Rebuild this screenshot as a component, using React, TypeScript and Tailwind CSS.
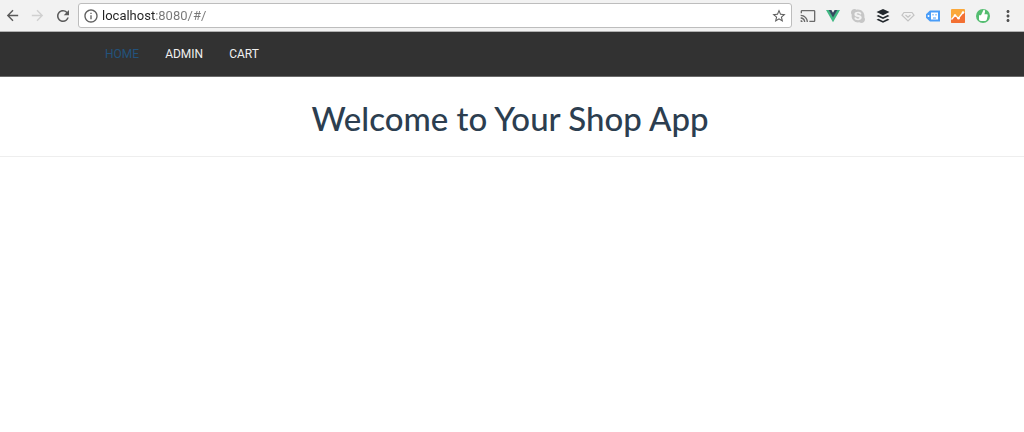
import { useState, type ReactNode } from "react";
import {
  MdArrowBack,
  MdArrowForward,
  MdCast,
  MdInfoOutline,
  MdMoreVert,
  MdRefresh,
  MdStarBorder,
} from "react-icons/md";
import { FaSkype } from "react-icons/fa";

const VueIcon = () => (
  <svg viewBox="0 0 16 16" className="size-4">
    <path d="M1 2h3.200L8 8.600 11.800 2H15L8 14.200z" fill="#41b883" />
    <path d="M3.700 2h2.700L8 4.800 9.600 2h2.700L8 9.500z" fill="#35495e" />
  </svg>
);

const BufferIcon = () => (
  <svg viewBox="0 0 16 16" className="size-4" fill="#23282d">
    <path d="M8 1l6.500 3.100L8 7.200 1.500 4.100z" />
    <path d="M1.500 7.900l1.900-.9L8 9.200 12.600 7l1.900.9L8 11z" />
    <path d="M1.500 11.700l1.900-.9L8 13l4.600-2.200 1.900.9L8 14.800z" />
  </svg>
);

const GemIcon = () => (
  <svg viewBox="0 0 16 16" className="size-4" fill="none" stroke="#c3c3c3" strokeWidth="1.200">
    <path d="M4 4.500h8l2 2.700L8 13 2 7.200z" />
    <path d="M5.500 7L8 9.300 10.500 7" />
  </svg>
);

const TagIcon = () => (
  <svg viewBox="0 0 16 16" className="size-4">
    <path d="M5 2.500h10v11H5L1 9.800V6.200z" fill="#4a9df8" />
    <rect x="6" y="4.500" width="7" height="7" fill="#fff" />
    <path d="M8 6v1.500M11 6v1.500M8 10h3" stroke="#4a9df8" />
    <circle cx="3.500" cy="8" r="1" fill="#fff" />
  </svg>
);

const AnalyticsIcon = () => (
  <svg viewBox="0 0 16 16" className="size-4">
    <rect x="1" y="1" width="14" height="14" rx="1" fill="#fba83a" />
    <path d="M1 11.500l4-4 3 2.500 6-5.500 1 .5v9a1 1 0 0 1-1 1H2a1 1 0 0 1-1-1z" fill="#f37033" />
    <path d="M1.500 11.500L5 7.500l3.500 2.700L13 4.500" fill="none" stroke="#fff" strokeWidth="1.300" />
    <g fill="#fff">
      <circle cx="5" cy="7.500" r="1.300" />
      <circle cx="8.500" cy="10.200" r="1.300" />
      <circle cx="13" cy="4.500" r="1.300" />
    </g>
  </svg>
);

const ThumbIcon = () => (
  <svg viewBox="0 0 16 16" className="size-4">
    <circle cx="8" cy="8" r="7" fill="#54bd70" />
    <path
      d="M4 7.300h2L8.600 1.800c1.300 0 1.700 1 1.400 2.200l-.6 2.300h2.300c.9 0 1.100.7 1 1.300l-.9 3.900c-.2.900-.8 1.400-1.600 1.400H6c-1.200 0-2-.7-2-1.700z"
      fill="#fff"
    />
  </svg>
);

const extensions: { label: string; icon: ReactNode }[] = [
  { label: "Cast", icon: <MdCast className="size-4 text-[#6b6b6b]" /> },
  { label: "Vue devtools", icon: <VueIcon /> },
  { label: "Skype", icon: <FaSkype className="size-4 text-[#c6c6c6]" /> },
  { label: "Buffer", icon: <BufferIcon /> },
  { label: "Gem", icon: <GemIcon /> },
  { label: "Tag", icon: <TagIcon /> },
  { label: "Analytics", icon: <AnalyticsIcon /> },
  { label: "Like", icon: <ThumbIcon /> },
  { label: "Menu", icon: <MdMoreVert className="size-[18px] text-[#505050]" /> },
];

const links = [
  { label: "HOME", href: "#/" },
  { label: "ADMIN", href: "#/admin" },
  { label: "CART", href: "#/cart" },
];

interface IconButtonProps {
  label: string;
  children: ReactNode;
}

const IconButton = ({ label, children }: IconButtonProps) => (
  <button
    type="button"
    aria-label={label}
    className="flex h-6 w-[25px] shrink-0 items-center justify-center"
  >
    {children}
  </button>
);

const Toolbar = () => {
  const [url, setUrl] = useState("localhost:8080/#/");

  return (
    <div className="flex h-8 items-center border-b border-[#b0b0b0] bg-[#f2f2f2] pr-1">
      <IconButton label="Back">
        <MdArrowBack className="size-[17px] text-[#5a5a5a]" />
      </IconButton>
      <IconButton label="Forward">
        <MdArrowForward className="size-[17px] text-[#d0d0d0]" />
      </IconButton>
      <IconButton label="Reload">
        <MdRefresh className="size-[18px] text-[#5a5a5a]" />
      </IconButton>
      <div className="mx-[3px] flex h-[25px] grow items-center rounded-[3px] border border-[#bdbdbd] bg-white pl-1">
        <MdInfoOutline className="size-4 shrink-0 text-[#5f5f5f]" />
        {/* host is dark, the rest of the address is gray */}
        <input
          type="text"
          aria-label="Address"
          value={url}
          onChange={(e) => setUrl(e.target.value)}
          className="ml-[3px] min-w-0 grow bg-linear-to-r from-[#222222] from-[53px] to-[#777777] to-[53px] bg-clip-text font-['Roboto',sans-serif] text-[13px] leading-5 text-transparent outline-none"
        />
        <IconButton label="Bookmark">
          <MdStarBorder className="size-4 text-[#5f5f5f]" />
        </IconButton>
      </div>
      {extensions.map(({ label, icon }) => (
        <IconButton key={label} label={label}>
          {icon}
        </IconButton>
      ))}
    </div>
  );
};

const App = () => {
  return (
    <div className="min-h-screen bg-white">
      <Toolbar />
      <nav className="flex h-[45px] items-center gap-[26px] border-b border-[#6a6a6a] bg-[#323232] px-[105px] font-['Roboto',sans-serif] text-xs text-[#f0f0f0]">
        {links.map(({ label, href }) => (
          <a key={label} href={href} className={label === "HOME" ? "text-[#23527c]" : ""}>
            {label}
          </a>
        ))}
      </nav>
      <header className="border-b border-[#eeeeee] pt-5 pr-1 pb-4 text-center">
        <h1 className="font-['Lato',sans-serif] text-[33px] leading-[43px] font-medium text-[#2c3e50]">
          Welcome to Your Shop App
        </h1>
      </header>
    </div>
  );
};

export default App;
